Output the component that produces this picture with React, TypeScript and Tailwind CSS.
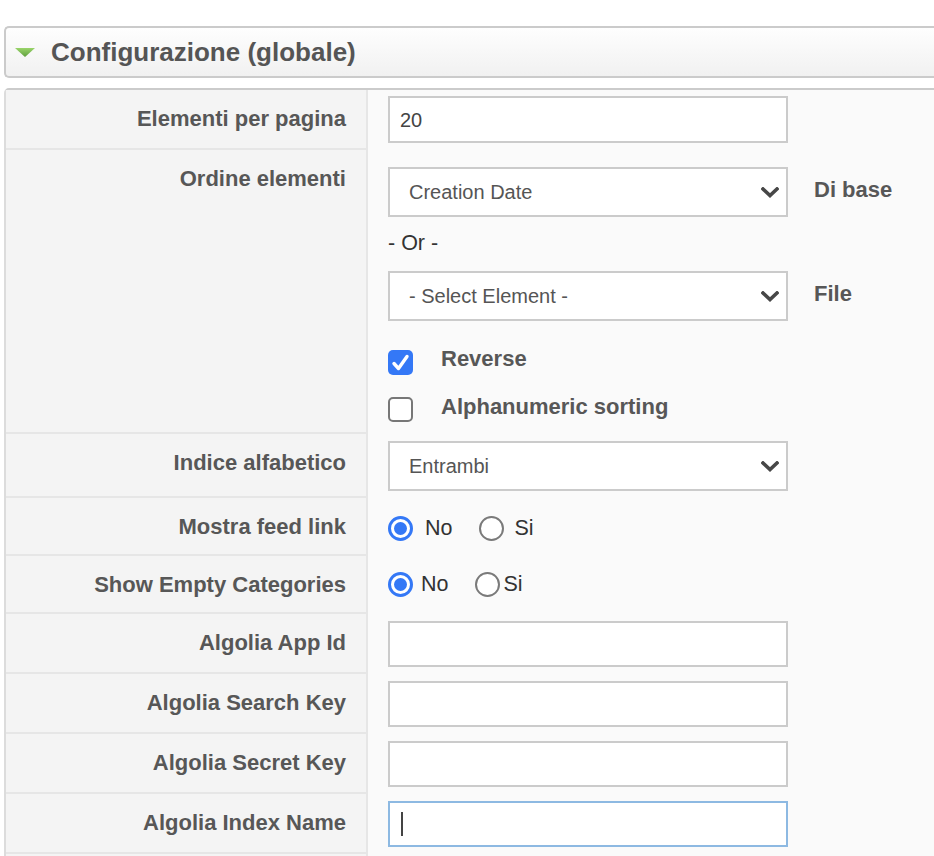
import React from "react";

const Chevron = () => (
  <svg width="18" height="11" viewBox="0 0 18 11" className="shrink-0">
    <polyline points="2,2 9,8.5 16,2" fill="none" stroke="#474747" strokeWidth="3.6" strokeLinecap="square" strokeLinejoin="miter" />
  </svg>
);

const Select = ({ value }: { value: string }) => (
  <div className="flex h-[50px] w-[400px] items-center justify-between border-2 border-[#cbcbcb] bg-white pl-[19px] pr-[7px]">
    <span className="text-[20px] leading-[24px] text-[#555]">{value}</span>
    <Chevron />
  </div>
);

const TextInput = ({ value, focused }: { value?: string; focused?: boolean }) => (
  <div
    className={
      "flex h-[46px] w-[400px] items-center border-2 bg-white pl-[10px] " +
      (focused ? "border-[#8db9e2]" : "border-[#cbcbcb]")
    }
  >
    {value ? <span className="text-[20px] leading-[24px] text-[#444]">{value}</span> : null}
    {focused ? <span className="ml-[1px] h-[24px] w-[2px] bg-[#444]" /> : null}
  </div>
);

const Radio = ({ checked }: { checked?: boolean }) =>
  checked ? (
    <span className="flex h-[25px] w-[25px] shrink-0 items-center justify-center rounded-full border-[3px] border-[#3478f6] bg-white">
      <span className="h-[13px] w-[13px] rounded-full bg-[#3478f6]" />
    </span>
  ) : (
    <span className="h-[25px] w-[25px] shrink-0 rounded-full border-2 border-[#7a7a7a] bg-white" />
  );

const Checkbox = ({ checked }: { checked?: boolean }) =>
  checked ? (
    <span className="flex h-[25px] w-[25px] shrink-0 items-center justify-center rounded-[5px] bg-[#3478f6]">
      <svg width="25" height="25" viewBox="0 0 25 25">
        <polyline points="6,13.5 10.5,18.5 19,6.5" fill="none" stroke="#fff" strokeWidth="3.4" strokeLinecap="round" strokeLinejoin="round" />
      </svg>
    </span>
  ) : (
    <span className="h-[25px] w-[25px] shrink-0 rounded-[5px] border-2 border-[#777] bg-white" />
  );

const Row = ({
  label,
  h,
  children,
}: {
  label: string;
  h: string;
  children: React.ReactNode;
}) => (
  <div className={"flex " + h}>
    <div className="w-[362px] shrink-0 border-b-2 border-r-2 border-[#e6e6e6] bg-[#f4f4f4] pr-[20px] pt-[17px] text-right text-[22px] font-bold leading-[24px] text-[#575757]">
      {label}
    </div>
    <div className="flex-1 pl-[20px]">{children}</div>
  </div>
);

export default function App() {
  return (
    <div className="h-[856px] w-[934px] overflow-hidden bg-white pl-[4px] pt-[26px] font-['Liberation_Sans',Arial,Helvetica,sans-serif]">
      {/* Header */}
      <div className="flex h-[52px] w-[960px] items-center rounded-l-[5px] border-2 border-r-0 border-[#cbcbcb] bg-gradient-to-b from-[#fefefe] to-[#f1f1f1] pl-[9px]">
        <svg width="20" height="9" viewBox="0 0 20 9" className="shrink-0">
          <defs>
            <linearGradient id="tri" x1="0" y1="0" x2="0" y2="1">
              <stop offset="0" stopColor="#9ad46a" />
              <stop offset="1" stopColor="#5f9f3e" />
            </linearGradient>
          </defs>
          <polygon points="0,0 20,0 10,9" fill="url(#tri)" />
        </svg>
        <span className="ml-[16px] text-[26px] font-bold leading-[30px] text-[#555]">Configurazione (globale)</span>
      </div>

      {/* Panel */}
      <div className="mt-[10px] w-[960px] rounded-tl-[5px] border-l-2 border-t-2 border-l-[#dcdcdc] border-t-[#cbcbcb] bg-[#fafafa]">
        <Row label="Elementi per pagina" h="h-[60px]">
          <div className="pt-[6px]">
            <div className="flex h-[47px] w-[400px] items-center border-2 border-[#cbcbcb] bg-white pl-[10px]">
              <span className="text-[20px] leading-[24px] text-[#444]">20</span>
            </div>
          </div>
        </Row>

        <Row label="Ordine elementi" h="h-[284px]">
          <div className="flex flex-col pt-[17px]">
            <div className="flex items-center">
              <Select value="Creation Date" />
              <span className="mb-[5px] ml-[26px] text-[22px] font-bold leading-[24px] text-[#575757]">Di base</span>
            </div>
            <div className="mt-[14px] text-[21.5px] leading-[24px] text-[#333]">- Or -</div>
            <div className="mt-[16px] flex items-center">
              <Select value="- Select Element -" />
              <span className="mb-[5px] ml-[26px] text-[22px] font-bold leading-[24px] text-[#575757]">File</span>
            </div>
            <div className="mt-[29px] flex items-start">
              <Checkbox checked />
              <span className="-mt-[3px] ml-[28px] text-[22px] font-bold leading-[24px] text-[#575757]">Reverse</span>
            </div>
            <div className="mt-[22px] flex items-start">
              <Checkbox />
              <span className="-mt-[2px] ml-[28px] text-[22px] font-bold leading-[24px] text-[#575757]">Alphanumeric sorting</span>
            </div>
          </div>
        </Row>

        <Row label="Indice alfabetico" h="h-[64px]">
          <div className="pt-[7px]">
            <Select value="Entrambi" />
          </div>
        </Row>

        <Row label="Mostra feed link" h="h-[58px]">
          <div className="flex items-center pt-[18px] text-[21.5px] leading-[25px] text-[#333]">
            <Radio checked />
            <span className="ml-[12px]">No</span>
            <span className="ml-[27px] flex"><Radio /></span>
            <span className="ml-[10px]">Si</span>
          </div>
        </Row>

        <Row label="Show Empty Categories" h="h-[58px]">
          <div className="flex items-center pt-[16px] text-[21.5px] leading-[25px] text-[#333]">
            <Radio checked />
            <span className="ml-[8px]">No</span>
            <span className="ml-[27px] flex"><Radio /></span>
            <span className="ml-[3px]">Si</span>
          </div>
        </Row>

        <Row label="Algolia App Id" h="h-[60px]">
          <div className="pt-[7px]">
            <TextInput />
          </div>
        </Row>
        <Row label="Algolia Search Key" h="h-[60px]">
          <div className="pt-[7px]">
            <TextInput />
          </div>
        </Row>
        <Row label="Algolia Secret Key" h="h-[60px]">
          <div className="pt-[7px]">
            <TextInput />
          </div>
        </Row>
        <Row label="Algolia Index Name" h="h-[60px]">
          <div className="pt-[7px]">
            <TextInput focused />
          </div>
        </Row>
        <Row label="" h="h-[60px]">
          <div />
        </Row>
      </div>
    </div>
  );
}
